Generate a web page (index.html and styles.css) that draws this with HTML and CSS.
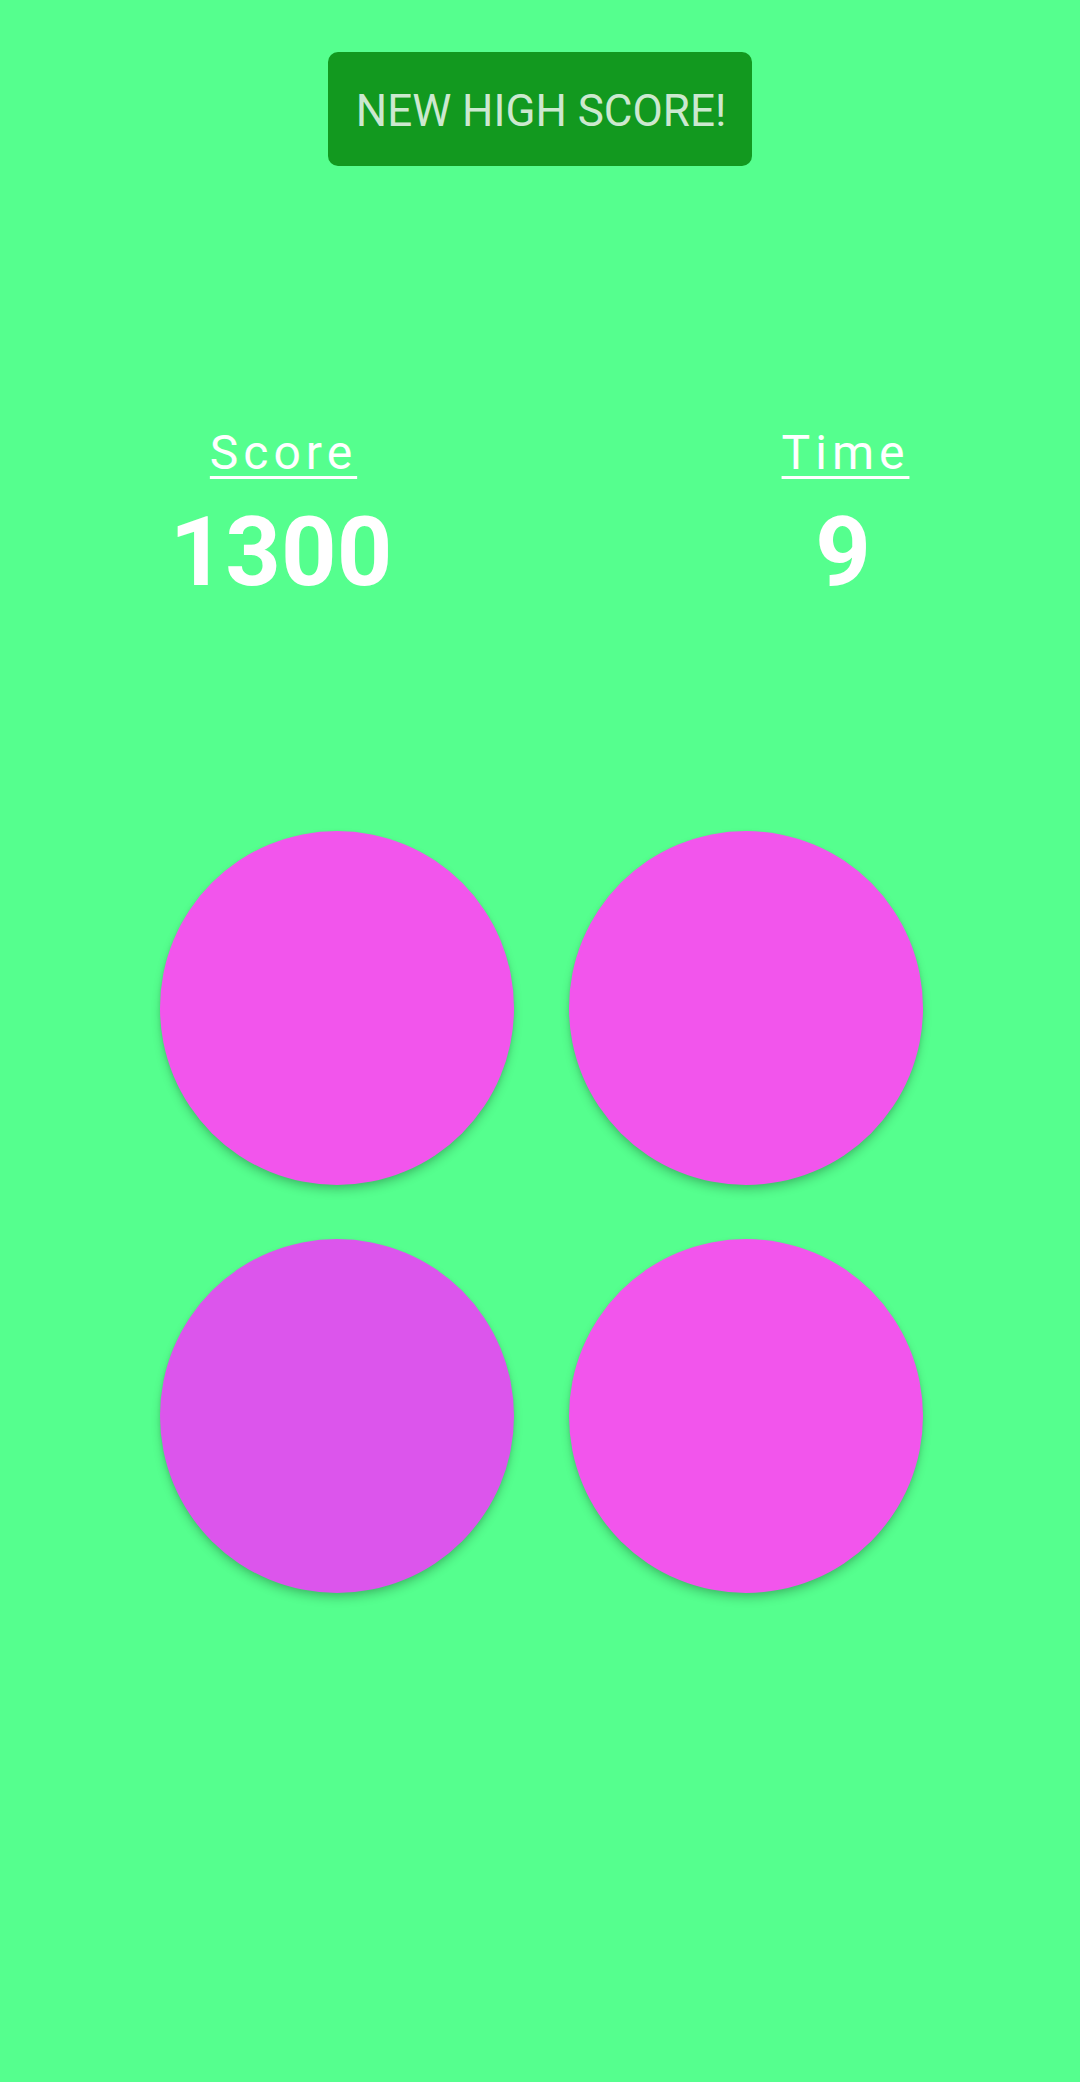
FILE: index.html
```html
<!DOCTYPE html>
<html>
<head>
<meta charset="utf-8">
<link rel="stylesheet" href="styles.css">
</head>
<body>
<div class="screen">
  <div class="top">
    <div class="badge">NEW HIGH SCORE!</div>
  </div>
  <div class="stats">
    <div class="stat">
      <div class="label">Score</div>
      <div class="value">1300</div>
    </div>
    <div class="stat">
      <div class="label">Time</div>
      <div class="value">9</div>
    </div>
  </div>
  <div class="grid">
    <div class="dot"></div>
    <div class="dot"></div>
    <div class="dot dim"></div>
    <div class="dot"></div>
  </div>
</div>
</body>
</html>
```
FILE: styles.css
```css
html, body {
  margin: 0;
  padding: 0;
  background: #55ff8e;
  font-family: Roboto, "Noto Sans", sans-serif;
}
.screen {
  width: 1080px;
  height: 2082px;
  display: flex;
  flex-direction: column;
}
.top {
  display: flex;
  justify-content: center;
  padding-top: 52px;
}
.badge {
  width: 424px;
  height: 114px;
  box-sizing: border-box;
  background: #12991f;
  border-radius: 10px;
  color: #cce8cf;
  font-size: 44px;
  display: flex;
  align-items: center;
  justify-content: center;
  padding-left: 2px;
  padding-top: 4px;
}
.stats {
  display: flex;
  padding-left: 131px;
  gap: 262px;
  margin-top: 259px;
}
.stat {
  width: 300px;
  display: flex;
  flex-direction: column;
  align-items: center;
  color: #ffffff;
}
.label {
  font-size: 48px;
  letter-spacing: 5px;
  text-decoration: underline;
  text-decoration-thickness: 3px;
  text-underline-offset: 7px;
  line-height: 56px;
  padding-left: 5px;
}
.value {
  font-size: 97px;
  font-weight: 700;
  line-height: 114px;
  margin-top: 14px;
}
.grid {
  display: grid;
  grid-template-columns: 354px 354px;
  gap: 54px 55px;
  justify-content: center;
  margin-top: 222px;
  padding-left: 3px;
}
.dot {
  width: 354px;
  height: 354px;
  border-radius: 50%;
  background: #f255ec;
  box-shadow: 0 6px 10px rgba(0, 0, 0, 0.18), 0 2px 4px rgba(0, 0, 0, 0.08);
}
.dot.dim {
  background: #dc55ec;
}
```
